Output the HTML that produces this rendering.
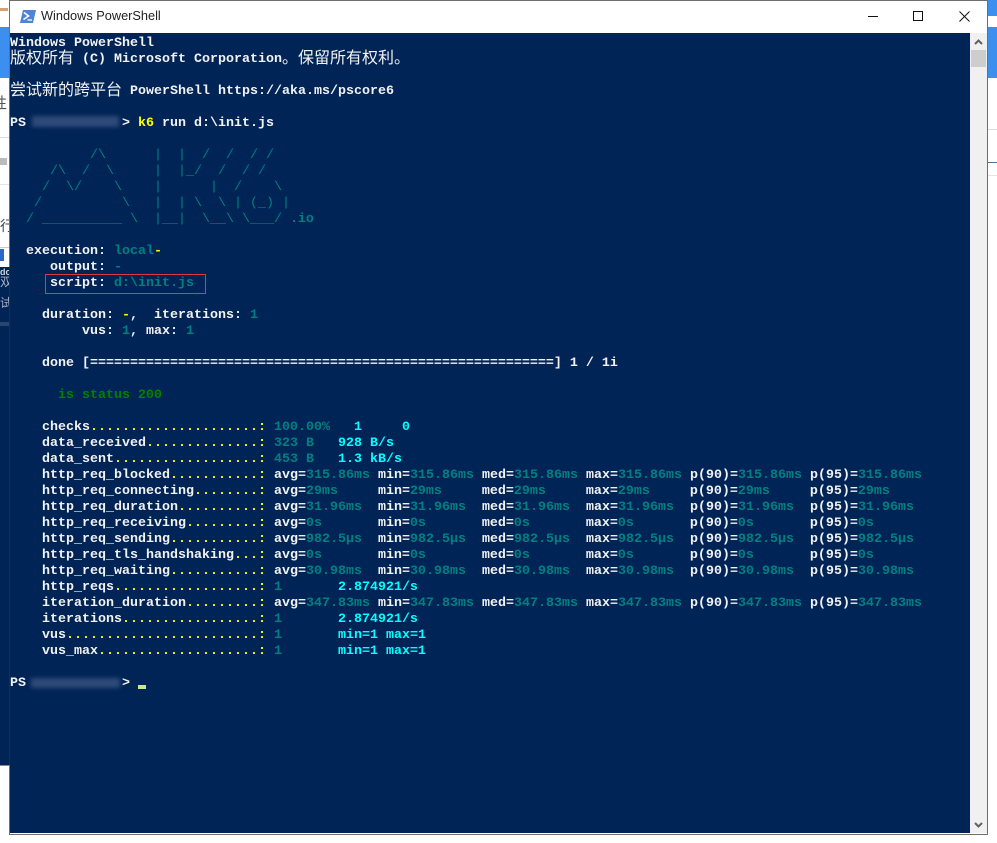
<!DOCTYPE html>
<html><head><meta charset="utf-8"><title>Windows PowerShell</title>
<style>
html,body{margin:0;padding:0;width:997px;height:843px;overflow:hidden;background:#fff}
div{position:absolute}
#con{left:10px;top:33px;width:960px;height:800px;background:#012456;overflow:hidden}
#txt{left:0;top:3px;width:960px;color:#f2f2f2;font:bold 13.33px/16px "Liberation Mono","Noto Sans CJK SC",monospace}
.l{position:relative;height:16px;white-space:pre}
.c{top:-2px}
.a{font-weight:normal}
.z{position:relative;top:1px;font:16px/16px "Liberation Sans","Noto Sans CJK SC",sans-serif;font-weight:normal}
i{font-style:normal;color:#ff0}
u{text-decoration:none;color:#008080}
em{font-style:normal;color:#0ff}
.g{color:#008000}
.bl{background:#2e4a78;filter:blur(2px)}
</style></head>
<body>
<!-- background windows left -->
<div style="left:0;top:27px;width:9px;height:51px;background:#3d8fef"></div>
<div style="left:0;top:8px;width:8px;height:3px;background:#d9a074"></div>
<div style="left:0;top:137px;width:9px;height:1px;background:#ddd"></div>
<div style="left:0;top:158px;width:7px;height:7px;background:#bbb"></div>
<div style="left:0;top:184px;width:9px;height:1px;background:#e5e5e5"></div>
<div style="left:0;top:247px;width:9px;height:1px;background:#ccc"></div>
<div style="left:0;top:249px;width:4px;height:12px;background:#2b66c8"></div>
<div style="left:0;top:267px;width:9px;height:498px;background:#012456"></div>
<div style="left:0;top:322px;width:9px;height:4px;background:#2a4570"></div>
<div style="left:0;top:765px;width:9px;height:1px;background:#888"></div>
<div style="left:0;top:95px;width:9px;height:16px;overflow:hidden;font:15px/16px 'Noto Sans CJK SC',sans-serif;color:#555"><span style="position:relative;left:-8px">性</span></div>
<div style="left:0;top:218px;width:9px;height:16px;overflow:hidden;font:14px/16px 'Noto Sans CJK SC',sans-serif;color:#444">行</div>
<div style="left:0;top:266px;width:9px;height:12px;overflow:hidden;font:bold 9px/12px 'Liberation Sans',sans-serif;color:#cfd6e0">do</div>
<div style="left:0;top:274px;width:9px;height:16px;overflow:hidden;font:12px/16px 'Noto Sans CJK SC',sans-serif;color:#aab4c4">双</div>
<div style="left:0;top:295px;width:9px;height:16px;overflow:hidden;font:12px/16px 'Noto Sans CJK SC',sans-serif;color:#aab4c4">试</div>
<!-- background windows right -->
<div style="left:988px;top:0;width:9px;height:16px;background:#3d8fef"></div>
<div style="left:988px;top:27px;width:9px;height:51px;background:#3d8fef"></div>
<div style="left:988px;top:129px;width:9px;height:1px;background:#ddd"></div>
<div style="left:988px;top:162px;width:9px;height:1px;background:#59708a"></div>
<div style="left:988px;top:175px;width:9px;height:1px;background:#e5e5e5"></div>
<!-- window -->
<div style="left:9px;top:0;width:977px;height:833px;border:1px solid #6e6e6e;background:#fff"></div>
<div style="left:9px;top:267px;width:1px;height:498px;background:#1c2c4c"></div>
<!-- title bar -->
<svg style="position:absolute;left:20px;top:10px" width="16" height="13" viewBox="0 0 16 13"><path d="M3 0H16L13 13H0Z" fill="#4d84d8"/><path d="M4 2.5L8.5 6 3.5 9.5" fill="none" stroke="#fff" stroke-width="1.6"/><path d="M7.5 10H12" stroke="#fff" stroke-width="1.3"/></svg>
<div style="left:41px;top:8px;font:12.75px/16px 'Liberation Sans',sans-serif;color:#222;white-space:pre">Windows PowerShell</div>
<div style="left:868px;top:16px;width:10px;height:1px;background:#111"></div>
<div style="left:913px;top:11px;width:8px;height:8px;border:1px solid #111"></div>
<svg style="position:absolute;left:959px;top:11px" width="11" height="11" viewBox="0 0 11 11"><path d="M.5.5L10.5 10.5M10.5.5L.5 10.5" stroke="#111" stroke-width="1" fill="none"/></svg>
<!-- scrollbar -->
<div style="left:970px;top:33px;width:17px;height:800px;background:#f0f0f0"></div>
<div style="left:971px;top:50px;width:15px;height:17px;background:#cdcdcd"></div>
<svg style="position:absolute;left:974px;top:39px" width="9" height="6" viewBox="0 0 9 6"><path d="M1 5L4.5 1.5 8 5" fill="none" stroke="#606060" stroke-width="2"/></svg>
<svg style="position:absolute;left:974px;top:822px" width="9" height="6" viewBox="0 0 9 6"><path d="M1 1L4.5 4.5 8 1" fill="none" stroke="#606060" stroke-width="2"/></svg>
<!-- console -->
<div id="con"><div id="txt">
<div class="l">Windows PowerShell</div>
<div class="l c"><span class="z">版权所有</span> (C) Microsoft Corporation<span class="z">。保留所有权利。</span></div>
<div class="l"></div>
<div class="l c"><span class="z">尝试新的跨平台</span> PowerShell https://aka.ms/pscore6</div>
<div class="l"></div>
<div class="l">PS            &gt; <i>k6</i> run d:\init.js</div>
<div class="l"></div>
<div class="l a"><u>          /\      |  |  /  /  / /</u></div>
<div class="l a"><u>     /\  /  \     |  |_/  /  / /</u></div>
<div class="l a"><u>    /  \/    \    |      |  /    \</u></div>
<div class="l a"><u>   /          \   |  | \  \ | (_) |</u></div>
<div class="l a"><u>  / __________ \  |__|  \__\ \___/ <b>.io</b></u></div>
<div class="l"></div>
<div class="l">  execution: <u>local</u><i>-</i></div>
<div class="l">     output: <u>-</u></div>
<div class="l">     script: <u>d:\init.js</u></div>
<div class="l"></div>
<div class="l">    duration: <i>-</i>,  iterations: <u>1</u></div>
<div class="l">         vus: <u>1</u>, max: <u>1</u></div>
<div class="l"></div>
<div class="l">    done [==========================================================] 1 / 1i</div>
<div class="l"></div>
<div class="l g">      is status 200</div>
<div class="l"></div>
<div class="l">    checks<i>.....................:</i> <u>100.00%</u>   <em>1</em>     <em>0</em></div>
<div class="l">    data_received<i>..............:</i> <u>323 B</u>   <em>928 B/s</em></div>
<div class="l">    data_sent<i>..................:</i> <u>453 B</u>   <em>1.3 kB/s</em></div>
<div class="l">    http_req_blocked<i>...........:</i> avg=<u>315.86ms</u> min=<u>315.86ms</u> med=<u>315.86ms</u> max=<u>315.86ms</u> p(90)=<u>315.86ms</u> p(95)=<u>315.86ms</u></div>
<div class="l">    http_req_connecting<i>........:</i> avg=<u>29ms</u>     min=<u>29ms</u>     med=<u>29ms</u>     max=<u>29ms</u>     p(90)=<u>29ms</u>     p(95)=<u>29ms</u></div>
<div class="l">    http_req_duration<i>..........:</i> avg=<u>31.96ms</u>  min=<u>31.96ms</u>  med=<u>31.96ms</u>  max=<u>31.96ms</u>  p(90)=<u>31.96ms</u>  p(95)=<u>31.96ms</u></div>
<div class="l">    http_req_receiving<i>.........:</i> avg=<u>0s</u>       min=<u>0s</u>       med=<u>0s</u>       max=<u>0s</u>       p(90)=<u>0s</u>       p(95)=<u>0s</u></div>
<div class="l">    http_req_sending<i>...........:</i> avg=<u>982.5μs</u>  min=<u>982.5μs</u>  med=<u>982.5μs</u>  max=<u>982.5μs</u>  p(90)=<u>982.5μs</u>  p(95)=<u>982.5μs</u></div>
<div class="l">    http_req_tls_handshaking<i>...:</i> avg=<u>0s</u>       min=<u>0s</u>       med=<u>0s</u>       max=<u>0s</u>       p(90)=<u>0s</u>       p(95)=<u>0s</u></div>
<div class="l">    http_req_waiting<i>...........:</i> avg=<u>30.98ms</u>  min=<u>30.98ms</u>  med=<u>30.98ms</u>  max=<u>30.98ms</u>  p(90)=<u>30.98ms</u>  p(95)=<u>30.98ms</u></div>
<div class="l">    http_reqs<i>..................:</i> <u>1</u>       <em>2.874921/s</em></div>
<div class="l">    iteration_duration<i>.........:</i> avg=<u>347.83ms</u> min=<u>347.83ms</u> med=<u>347.83ms</u> max=<u>347.83ms</u> p(90)=<u>347.83ms</u> p(95)=<u>347.83ms</u></div>
<div class="l">    iterations<i>.................:</i> <u>1</u>       <em>2.874921/s</em></div>
<div class="l">    vus<i>........................:</i> <u>1</u>       <em>min=1 max=1</em></div>
<div class="l">    vus_max<i>....................:</i> <u>1</u>       <em>min=1 max=1</em></div>
<div class="l"></div>
<div class="l">PS            &gt;</div>
</div></div>
<!-- redactions, highlight, cursor -->
<div class="bl" style="left:32px;top:116px;width:87px;height:11px"></div>
<div class="bl" style="left:31px;top:678px;width:89px;height:10px"></div>
<div style="left:45px;top:274px;width:159px;height:18px;border:1px solid #d93a3a"></div>
<div style="left:138px;top:685px;width:8px;height:4px;background:#cbe58e"></div>
</body></html>
